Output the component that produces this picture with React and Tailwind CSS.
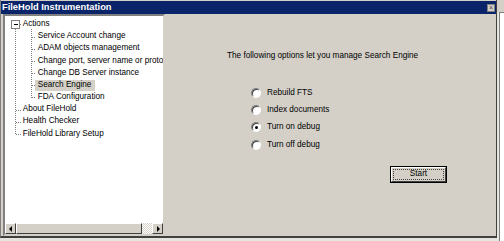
import React from 'react';

const children = [
  'Service Account change',
  'ADAM objects management',
  'Change port, server name or protocol',
  'Change DB Server instance',
  'Search Engine',
  'FDA Configuration',
];

const roots = ['About FileHold', 'Health Checker', 'FileHold Library Setup'];

const options = ['Rebuild FTS', 'Index documents', 'Turn on debug', 'Turn off debug'];

const TreeLines = () => (
  <svg className="absolute left-0 top-[1.5px] pointer-events-none" width="158" height="130">
    <g stroke="#808080" strokeDasharray="1 1" fill="none" shapeRendering="crispEdges">
      <path d="M10.5 11 V117" />
      <path d="M14.5 6.5 H17" />
      <path d="M10.5 92.5 H16 M10.5 104.5 H16 M10.5 116.5 H16" />
      <path d="M26.5 11 V80" />
      <path d="M26.5 19.5 H31 M26.5 31.5 H31 M26.5 43.5 H31 M26.5 55.5 H31 M26.5 67.5 H31 M26.5 79.5 H31" />
    </g>
    <rect x="6.5" y="2.5" width="8" height="8" fill="#fff" stroke="#808080" shapeRendering="crispEdges" />
    <path d="M8.5 6.5 H12.5" stroke="#000" shapeRendering="crispEdges" />
  </svg>
);

const Radio = ({ checked }) => (
  <span className="relative w-[10px] h-[10px] rounded-full bg-white border border-t-[#808080] border-l-[#808080] border-b-[#fff] border-r-[#fff] shadow-[inset_1px_1px_0_#404040] flex items-center justify-center">
    {checked && <span className="w-[3px] h-[3px] rounded-full bg-black" />}
  </span>
);

const ArrowBtn = ({ dir }) => (
  <div className="w-[11px] h-full bg-[#d4d0c8] border border-t-white border-l-white border-b-[#404040] border-r-[#404040] flex items-center justify-center">
    <svg width="4" height="6" viewBox="0 0 4 6">
      {dir === 'left' ? <path d="M3 0 V6 L0 3 Z" fill="#000" /> : <path d="M1 0 V6 L4 3 Z" fill="#000" />}
    </svg>
  </div>
);

export default function App() {
  return (
    <div className="w-[504px] h-[241px] overflow-hidden flex bg-[#e6e4df] font-['Liberation_Sans',Arial,sans-serif] text-[8.2px] text-black">
      <div className="w-[497px] h-[238px] flex flex-col bg-[#d4d0c8] border-l border-l-[#808080] border-r border-r-[#404040] border-b-2 border-b-[#404040]">
        {/* title bar */}
        <div className="mt-[1px] h-[13px] bg-[#0a246a] flex items-center justify-between pl-[1px] pr-[1px]">
          <span className="text-white font-bold text-[9.3px] leading-none">FileHold Instrumentation</span>
          <span className="w-[8px] h-[8px] bg-[#d4d0c8] border border-[#808080] flex items-center justify-center text-[7px] leading-none text-[#404040]">×</span>
        </div>
        <div className="flex flex-1">
          {/* tree panel */}
          <div className="ml-[2px] w-[162px] h-[222px] flex flex-col bg-white border-2 border-t-[#808080] border-l-[#808080] border-b-[#d4d0c8] border-r-[#d4d0c8]">
            <div className="relative flex-1 overflow-hidden pt-[2px] whitespace-nowrap">
              <TreeLines />
              <div className="h-[12.2px] flex items-center pl-[15px]">
                <span className="px-[2.7px] leading-none">Actions</span>
              </div>
              {children.map((c) => (
                <div key={c} className="h-[12.2px] flex items-center pl-[30px]">
                  <span
                    className={
                      c === 'Search Engine'
                        ? 'px-[2.7px] h-[11px] flex items-center bg-[#d4d0c8] w-[60px]'
                        : 'px-[2.7px] leading-none'
                    }
                  >
                    {c}
                  </span>
                </div>
              ))}
              {roots.map((r) => (
                <div key={r} className="h-[12.2px] flex items-center pl-[15px]">
                  <span className="px-[2.7px] leading-none">{r}</span>
                </div>
              ))}
            </div>
            {/* horizontal scrollbar */}
            <div className="h-[11px] flex">
              <ArrowBtn dir="left" />
              <div className="w-[126px] h-full bg-[#d4d0c8] border border-t-white border-l-white border-b-[#404040] border-r-[#404040]" />
              <div className="flex-1 h-full bg-[repeating-conic-gradient(#d4d0c8_0_25%,#ffffff_0_50%)] bg-[length:2px_2px]" />
              <ArrowBtn dir="right" />
            </div>
          </div>
          {/* content */}
          <div className="flex-1 pl-[62px] pt-[37px] flex flex-col items-start">
            <div className="h-[10px] leading-[10px] whitespace-nowrap">The following options let you manage Search Engine</div>
            <div className="mt-[23px] ml-[24px] flex flex-col">
              {options.map((o, i) => (
                <div key={o} className="h-[17.4px] flex items-center gap-[6px]">
                  <Radio checked={i === 2} />
                  <span className="leading-none">{o}</span>
                </div>
              ))}
            </div>
            <div className="mt-[12px] ml-[163px] w-[57px] h-[17px] border border-black flex">
              <div className="flex-1 bg-[#d4d0c8] border border-t-white border-l-white border-b-[#404040] border-r-[#404040] p-[1px] flex">
                <div className="flex-1 border border-dotted border-[#404040] flex items-center justify-center leading-none">Start</div>
              </div>
            </div>
          </div>
        </div>
      </div>
      {/* window behind on the right */}
      <div className="flex-1 flex flex-col">
        <div className="h-[12px] bg-[#d4d0c8]" />
        <div className="flex-1 ml-[2px] bg-white border-l border-l-[#808080] border-t border-t-[#808080]" />
      </div>
    </div>
  );
}
